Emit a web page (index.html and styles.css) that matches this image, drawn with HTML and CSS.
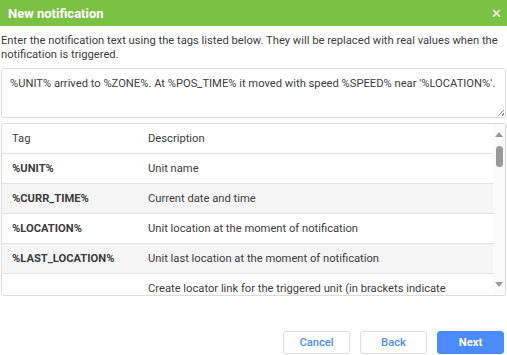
FILE: index.html
```html
<!DOCTYPE html>
<html lang="en">
<head>
    <meta charset="UTF-8">
    <title>New notification</title>
    <link rel="stylesheet" href="styles.css">
</head>
<body>
    <div class="dialog">
        <div class="dialog-header">
            <span class="dialog-title">New notification</span>
            <span class="dialog-close">&#x2715;</span>
        </div>

        <div class="dialog-body">
            <p class="intro">Enter the notification text using the tags listed below. They will be replaced with real values when the notification is triggered.</p>

            <div class="text-box">%UNIT% arrived to %ZONE%. At %POS_TIME% it moved with speed %SPEED% near '%LOCATION%'.</div>

            <div class="tags">
                <div class="tags-list">
                    <div class="tag-row tag-head">
                        <div class="tag-name">Tag</div>
                        <div class="tag-desc">Description</div>
                    </div>
                    <div class="tag-row">
                        <div class="tag-name">%UNIT%</div>
                        <div class="tag-desc">Unit name</div>
                    </div>
                    <div class="tag-row striped">
                        <div class="tag-name">%CURR_TIME%</div>
                        <div class="tag-desc">Current date and time</div>
                    </div>
                    <div class="tag-row">
                        <div class="tag-name">%LOCATION%</div>
                        <div class="tag-desc">Unit location at the moment of notification</div>
                    </div>
                    <div class="tag-row striped">
                        <div class="tag-name">%LAST_LOCATION%</div>
                        <div class="tag-desc">Unit last location at the moment of notification</div>
                    </div>
                    <div class="tag-row">
                        <div class="tag-name"></div>
                        <div class="tag-desc">Create locator link for the triggered unit (in brackets indicate lifetime of the link)</div>
                    </div>
                </div>
                <div class="scrollbar">
                    <span class="arrow-up"></span>
                    <span class="thumb"></span>
                    <span class="arrow-down"></span>
                </div>
            </div>
        </div>

        <div class="dialog-footer">
            <button class="btn">Cancel</button>
            <button class="btn">Back</button>
            <button class="btn btn-primary">Next</button>
        </div>
    </div>
</body>
</html>
```

FILE: styles.css
```css
body {
    margin: 0;
    background-color: #fff;
    color: #3c3c3c;
    font-family: Roboto, 'Liberation Sans', sans-serif;
    font-size: 11.2px;
}

.dialog {
    width: 507px;
    height: 355px;
    display: flex;
    flex-direction: column;
}

.dialog-header {
    height: 26px;
    background-color: #7bc144;
    color: #fff;
    display: flex;
    align-items: center;
    justify-content: space-between;
    padding: 0 5px 0 8px;
}

.dialog-title {
    font-size: 13px;
    font-weight: bold;
}

.dialog-close {
    font-size: 13px;
}

.dialog-body {
    padding: 0 1px 0 1px;
}

.intro {
    margin: 8px 0 0 0;
    line-height: 14px;
}

.text-box {
    margin-top: 6px;
    height: 34px;
    padding: 7px 8px 7px 8px;
    border: 1px solid #dcdcdc;
    border-radius: 3px;
    line-height: 16px;
    position: relative;
}

.text-box::after {
    content: "";
    position: absolute;
    right: 1px;
    bottom: 1px;
    width: 6px;
    height: 6px;
    background: linear-gradient(135deg, transparent 45%, #888 45%, #888 55%, transparent 55%, transparent 75%, #888 75%, #888 85%, transparent 85%);
}

.tags {
    margin-top: 5px;
    height: 171px;
    border: 1px solid #dcdcdc;
    border-radius: 3px;
    display: flex;
    overflow: hidden;
}

.tags-list {
    flex: 1;
}

.tag-row {
    display: flex;
    height: 30px;
    box-sizing: border-box;
    padding-top: 8px;
    border-bottom: 1px solid #e2e2e2;
    line-height: 14px;
}

.tag-row:last-child {
    border-bottom: none;
}

.striped {
    background-color: #f5f5f5;
}

.tag-name {
    width: 136px;
    padding-left: 10px;
    font-weight: bold;
}

.tag-head .tag-name {
    font-weight: normal;
}

.tag-desc {
    flex: 1;
    padding-right: 14px;
}

.scrollbar {
    width: 12px;
    background-color: #fafafa;
    display: flex;
    flex-direction: column;
    align-items: center;
    padding-top: 8px;
}

.arrow-up {
    width: 0;
    height: 0;
    border-left: 4px solid transparent;
    border-right: 4px solid transparent;
    border-bottom: 5px solid #999;
}

.thumb {
    width: 7px;
    height: 21px;
    border-radius: 4px;
    background-color: #999;
    margin-top: 9px;
}

.arrow-down {
    width: 0;
    height: 0;
    border-left: 4px solid transparent;
    border-right: 4px solid transparent;
    border-top: 5px solid #999;
    margin-top: auto;
    margin-bottom: 8px;
}

.dialog-footer {
    margin-top: auto;
    display: flex;
    justify-content: flex-end;
    gap: 10px;
    padding: 0 3px 1px 0;
}

.btn {
    width: 67px;
    height: 23px;
    border: 1px solid #dcdcdc;
    border-radius: 3px;
    background-color: #fff;
    color: #4a8cff;
    font-family: Roboto, 'Liberation Sans', sans-serif;
    font-size: 11.2px;
    font-weight: 500;
    cursor: pointer;
}

.btn-primary {
    background-color: #4a8cff;
    border-color: #4a8cff;
    color: #fff;
    font-weight: bold;
}
```
